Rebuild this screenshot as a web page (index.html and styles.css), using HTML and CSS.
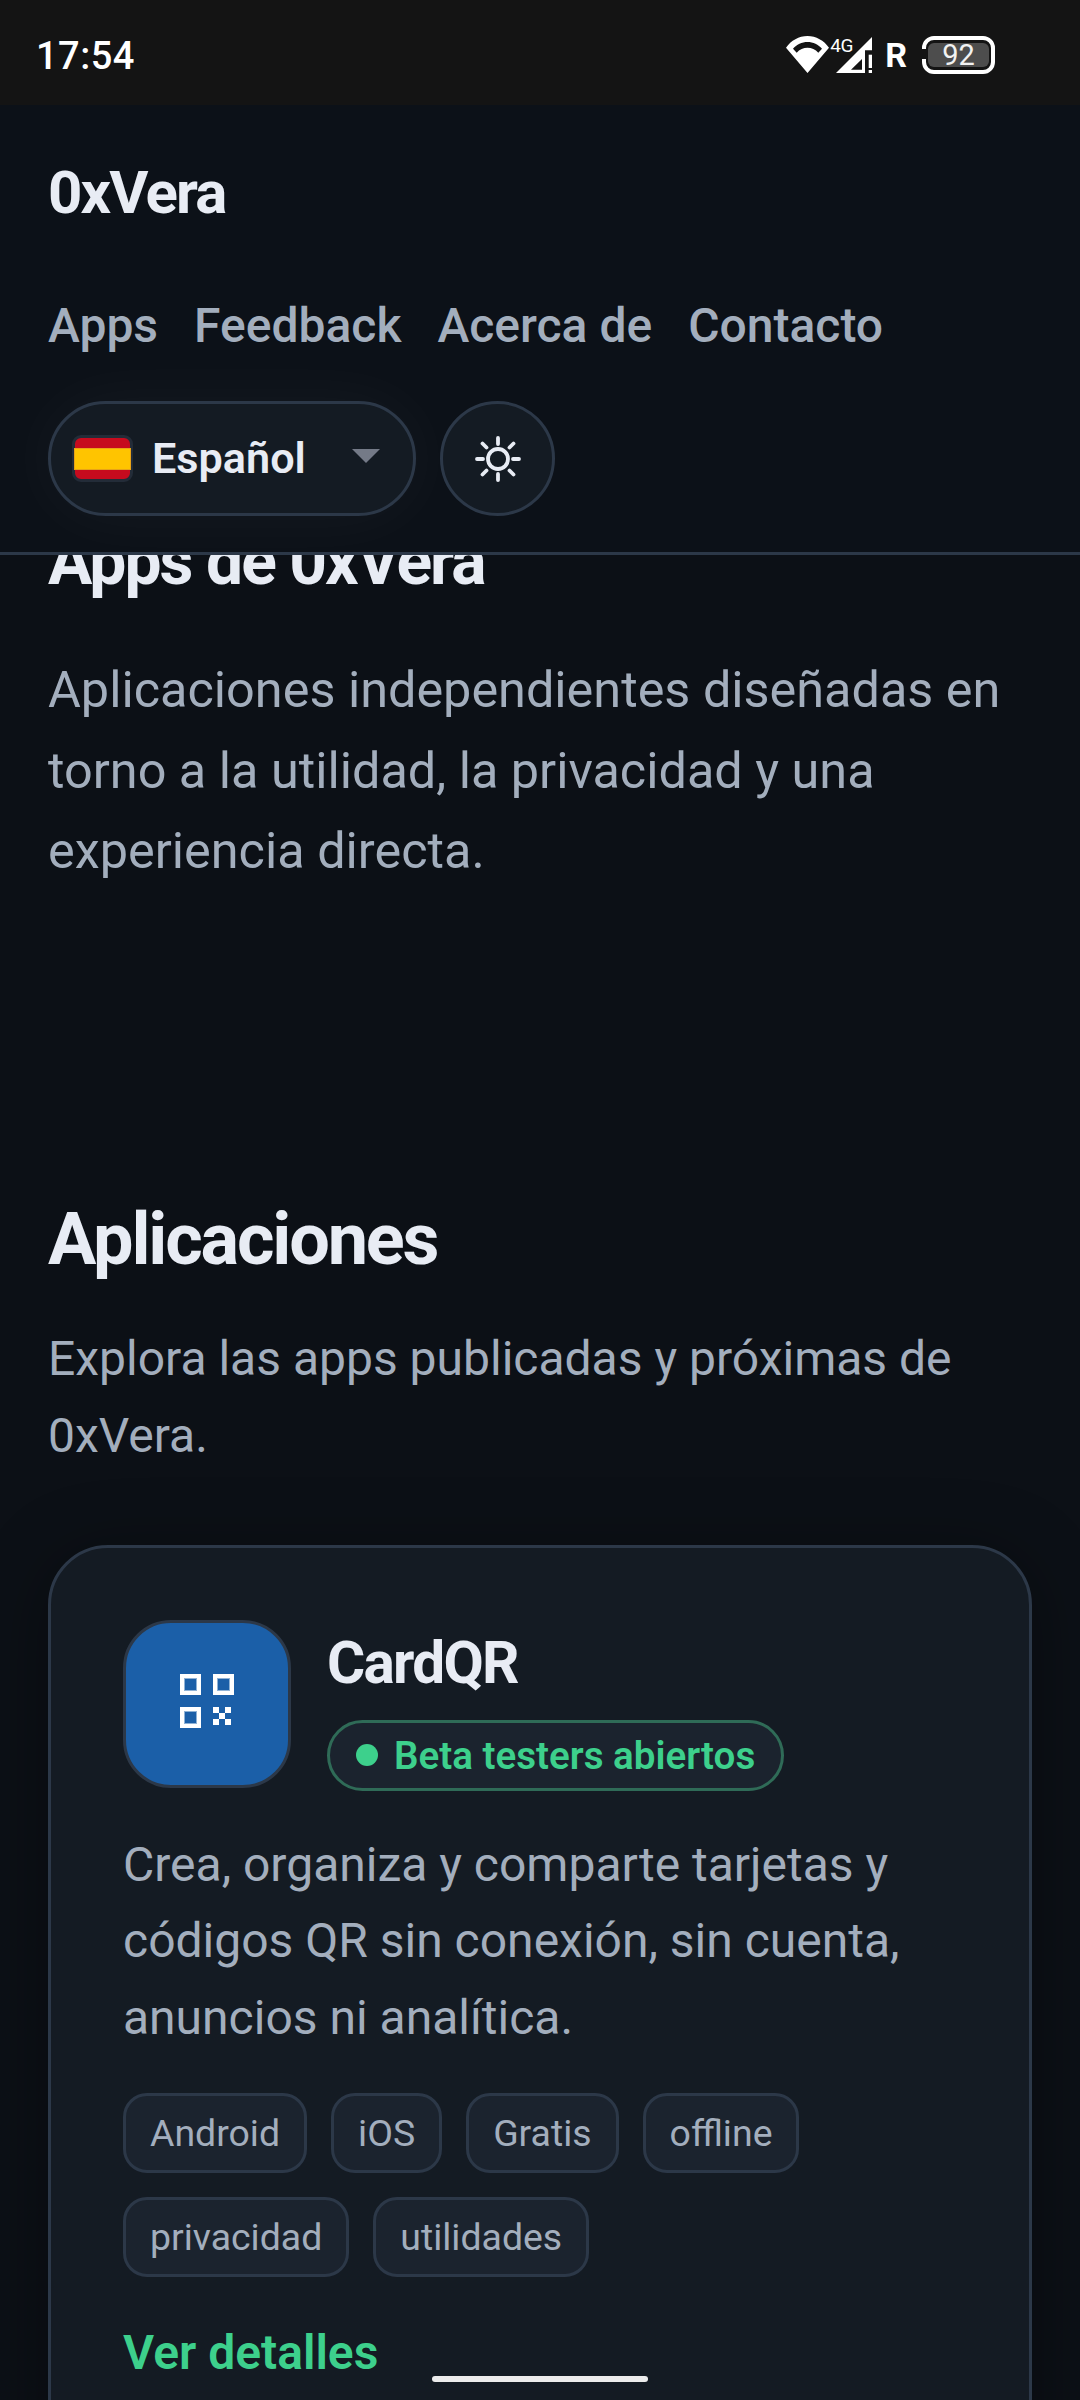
FILE: index.html
```html
<!DOCTYPE html>
<html lang="es">
<head>
<meta charset="utf-8">
<title>0xVera</title>
<link rel="stylesheet" href="styles.css">
</head>
<body>
<div class="screen">
  <div class="statusbar">
    <span class="clock">17:54</span>
    <div class="status-icons">
      <svg class="ic-wifi" width="43" height="37" viewBox="0 0 43 37"><path fill="#fff" fill-rule="evenodd" d="M21.500 37 0 11.700C5 4.500 13 0 21.500 0S38 4.500 43 11.700zM7 12.700 10.700 16.700C13.500 13.500 17.500 11.700 21.500 11.700s8 1.800 10.800 5L36 12.700C32.500 8.500 27 6 21.500 6S10.500 8.500 7 12.700z"/></svg>
      <span class="net">4G</span>
      <svg class="ic-signal" width="36" height="36" viewBox="0 0 36 36"><path fill="#fff" fill-rule="evenodd" d="M0 36 36 0V13.300H29V36zM15 32.700H26V22z"/><rect x="32.700" y="17.700" width="3.300" height="13.300" fill="#fff"/><rect x="32.700" y="33" width="3.300" height="3" fill="#fff"/></svg>
      <span class="roam">R</span>
      <div class="battery"><span class="battery-level">92</span></div>
    </div>
  </div>
  <header class="topbar">
    <div class="brand">0xVera</div>
    <nav class="nav">
      <a>Apps</a><a>Feedback</a><a>Acerca de</a><a>Contacto</a>
    </nav>
    <div class="controls">
      <div class="lang">
        <span class="flag"><span class="flag-mid"></span></span>
        <span class="lang-name">Español</span>
        <span class="caret"></span>
      </div>
      <div class="theme">
        <svg width="48" height="48" viewBox="0 0 48 48" fill="none" stroke="#e8ecf4" stroke-width="3.800" stroke-linecap="round"><circle cx="24" cy="24" r="10"/><path d="M24 3v6M24 39v6M3 24h6M39 24h6M8.500 8.500l4 4M35.500 35.500l4 4M8.500 39.500l4-4M35.500 12.500l4-4"/></svg>
      </div>
    </div>
  </header>
  <main class="main">
    <section class="hero">
      <h1 class="hero-title">Apps de 0xVera</h1>
      <p class="hero-text">Aplicaciones independientes diseñadas en torno a la utilidad, la privacidad y una experiencia directa.</p>
    </section>
    <section class="apps">
      <h2 class="apps-title">Aplicaciones</h2>
      <p class="apps-text">Explora las apps publicadas y próximas de 0xVera.</p>
      <article class="card">
        <div class="card-head">
          <div class="app-icon">
            <svg width="54" height="54" viewBox="0 0 54 54" shape-rendering="crispEdges"><g fill="none" stroke="#fff" stroke-width="4"><rect x="2" y="2" width="17" height="17"/><rect x="35" y="2" width="17" height="17"/><rect x="2" y="35" width="17" height="17"/></g><g fill="none" stroke="#8fb2d6" stroke-width="1"><rect x="4.500" y="4.500" width="12" height="12"/><rect x="37.500" y="4.500" width="12" height="12"/><rect x="4.500" y="37.500" width="12" height="12"/></g><path fill="#fff" d="M33 33h6v6h-6zM45 33h6v6h-6zM39 39h6v6h-6zM33 45h6v6h-6zM45 45h6v6h-6z"/></svg>
          </div>
          <div class="card-title">
            <h3 class="app-name">CardQR</h3>
            <span class="status"><span class="dot"></span>Beta testers abiertos</span>
          </div>
        </div>
        <p class="card-text">Crea, organiza y comparte tarjetas y códigos QR sin conexión, sin cuenta, anuncios ni analítica.</p>
        <div class="tags">
          <span class="tag">Android</span><span class="tag">iOS</span><span class="tag">Gratis</span><span class="tag">offline</span><span class="tag">privacidad</span><span class="tag">utilidades</span>
        </div>
        <a class="details">Ver detalles</a>
      </article>
    </section>
  </main>
  <div class="home-bar"></div>
</div>
</body>
</html>
```
FILE: styles.css
```css
* { box-sizing: border-box; }
html, body { margin: 0; padding: 0; }
body { width: 1080px; height: 2400px; overflow: hidden; background: #0c1016; font-family: Roboto, "Noto Sans", sans-serif; }
.screen { position: relative; width: 1080px; height: 2400px; overflow: hidden; display: flex; flex-direction: column; background: #0c1016; }

.statusbar { flex: none; height: 105px; background: #141414; display: flex; align-items: center; justify-content: space-between; padding: 4px 85px 0 36px; color: #fff; }
.clock { font-size: 38px; font-weight: 500; letter-spacing: 0.5px; margin-top: 2px; }
.status-icons { display: flex; align-items: center; position: relative; }
.net { position: absolute; left: 44px; top: 0; font-size: 19px; line-height: 20px; letter-spacing: -0.5px; }
.ic-signal { margin-left: 7px; }
.roam { font-size: 34px; font-weight: 700; line-height: 38px; margin-left: 13px; }
.battery { position: relative; width: 73px; height: 38px; margin-left: 15px; border: 4px solid #fff; border-radius: 12px; padding: 3px 2px; display: flex; }
.battery::before { content: ""; position: absolute; left: -4px; top: 9px; width: 4px; height: 10px; background: #141414; }
.battery-level { flex: 1; background: #4d4d4d; border-radius: 6px; color: #f2f2f2; font-size: 29px; line-height: 24px; text-align: center; }

.topbar { flex: none; position: relative; z-index: 2; height: 450px; background: #0c1118; border-bottom: 3px solid #2c3848; padding: 56px 48px 0; }
.brand { font-size: 60px; font-weight: 700; color: #e8ecf4; line-height: 64px; letter-spacing: -1.800px; }
.nav { display: flex; gap: 36px; margin-top: 74px; }
.nav a { font-size: 48px; font-weight: 500; color: #a3aebd; line-height: 54px; }
.controls { display: flex; gap: 24px; margin-top: 48px; }
.lang { width: 368px; height: 115px; border: 3px solid #2c3848; border-radius: 58px; background: #141b23; display: flex; align-items: center; padding-left: 21px; box-shadow: 0 0 70px rgba(255, 255, 255, 0.045); }
.flag { flex: none; width: 61px; height: 47px; border: 3px solid #232c38; border-radius: 9px; background: #c60b1e; display: flex; align-items: center; }
.flag-mid { width: 100%; height: 20px; background: #ffc400; box-shadow: 0 0 0 1px #e8a317; }
.lang-name { font-size: 43.200px; font-weight: 600; color: #e8ecf4; margin-left: 19px; }
.caret { margin-left: 46px; margin-top: -6px; border-left: 14px solid transparent; border-right: 14px solid transparent; border-top: 14px solid #747a87; }
.theme { width: 115px; height: 115px; border: 3px solid #2c3848; border-radius: 50%; background: #141b23; display: flex; align-items: center; justify-content: center; }

.main { flex: 1; min-height: 0; padding: 0 48px; }
.hero-title { margin: -33px 0 0; font-size: 66px; font-weight: 700; color: #e8ecf4; line-height: 80px; letter-spacing: -1.980px; }
.hero-text { margin: 48px 0 0; font-size: 50.400px; line-height: 80.640px; color: #a3aebd; }
.apps-title { margin: 308px 0 0; font-size: 72px; font-weight: 700; color: #e8ecf4; line-height: 80px; letter-spacing: -2.160px; }
.apps-text { margin: 41px 0 0; font-size: 48px; line-height: 76.800px; color: #a3aebd; }
.card { margin-top: 70px; height: 1200px; border: 3px solid #2c3848; border-radius: 60px; background: #141b23; padding: 72px 72px 0; box-shadow: 0 10px 70px rgba(0, 0, 0, 0.35); }
.card-head { display: flex; gap: 36px; align-items: flex-start; }
.app-icon { flex: none; width: 168px; height: 168px; border: 3px solid #2c3848; border-radius: 48px; background: #1b5fa8; display: flex; align-items: center; justify-content: center; padding-bottom: 6px; }
.app-name { margin: 0 0 14px; font-size: 58.500px; font-weight: 700; color: #e8ecf4; line-height: 86px; letter-spacing: -1.750px; }
.status { height: 71px; padding: 0 26px; display: inline-flex; align-items: center; gap: 16px; border: 3px solid #2f6b57; border-radius: 36px; background: #1b232e; color: #3dd08c; font-size: 38.600px; font-weight: 600; }
.dot { width: 22px; height: 22px; border-radius: 50%; background: #3dd08c; }
.card-text { margin: 36px 0 0; font-size: 48px; line-height: 76.800px; color: #a3aebd; }
.tags { display: flex; flex-wrap: wrap; gap: 24px; margin-top: 36px; }
.tag { height: 80px; padding: 0 24px; display: inline-flex; align-items: center; border: 3px solid #2c3848; border-radius: 24px; background: #1b232e; color: #a3aebd; font-size: 37.440px; }
.details { display: block; margin-top: 49px; font-size: 48px; font-weight: 600; color: #3dd08c; line-height: 54px; }
.home-bar { position: absolute; left: 432px; top: 2376px; width: 216px; height: 6px; border-radius: 3px; background: #ececec; }
```
